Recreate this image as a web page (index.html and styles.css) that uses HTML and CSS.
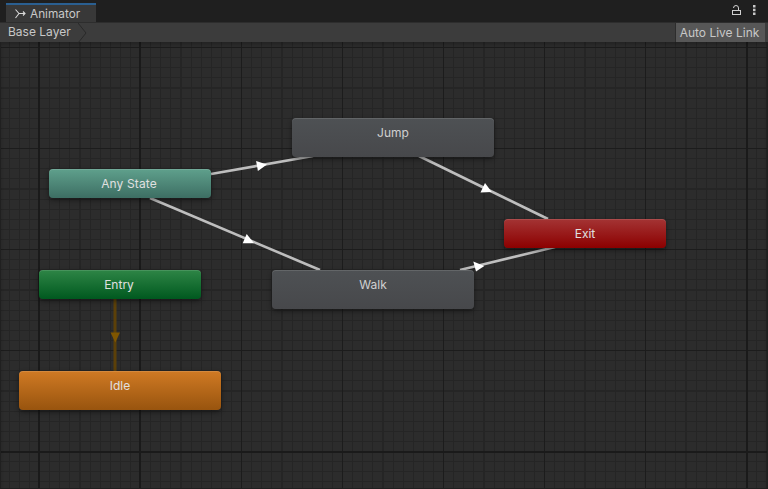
FILE: index.html
```html
<!DOCTYPE html>
<html lang="en">
<head>
<meta charset="utf-8">
<title>Animator</title>
<link rel="stylesheet" href="styles.css">
</head>
<body>
<div class="window">
  <header class="tabbar">
    <div class="tab">
      <svg class="tab-icon" width="11" height="10" viewBox="0 0 11 10"><path d="M0.5 0.5 4 4.5H10M0.5 9 4 4.5M8 2.5 10 4.5 8 6.5" fill="none" stroke="#d8d8d8" stroke-width="1.1"/></svg>
      <span>Animator</span>
    </div>
    <div class="tab-actions">
      <svg width="9" height="10" viewBox="0 0 9 10"><path d="M1.5 3a2.5 2.5 0 0 1 5 0V5" fill="none" stroke="#d0d0d0"/><rect x="0.5" y="5.5" width="8" height="4" fill="none" stroke="#d0d0d0"/></svg>
      <svg width="3" height="10" viewBox="0 0 3 10"><rect x="0" y="0" width="2.5" height="2.5" fill="#c8c8c8"/><rect x="0" y="3.7" width="2.5" height="2.5" fill="#c8c8c8"/><rect x="0" y="7.5" width="2.5" height="2.5" fill="#c8c8c8"/></svg>
    </div>
  </header>
  <div class="toolbar">
    <div class="crumb">Base Layer
      <svg class="crumb-tip" width="10" height="20" viewBox="0 0 10 20"><path d="M0 0 8 10 0 20" fill="#3c3c3c" stroke="#2a2a2a"/></svg>
    </div>
    <div class="live-link">Auto Live Link</div>
  </div>
  <main class="canvas">
    <svg class="edges" width="768" height="447" viewBox="0 42 768 447">
      <g class="edge">
        <line x1="211" y1="174" x2="313" y2="156"/>
        <polygon points="267,164.5 257.9,170.9 256.1,161.1"/>
        <line x1="419" y1="156" x2="548" y2="219"/>
        <polygon points="491.7,192 485,183 480.5,192.5"/>
        <line x1="150" y1="198" x2="320" y2="270"/>
        <polygon points="254,243.3 246.7,234 242.7,243.3"/>
        <line x1="460" y1="270" x2="555" y2="247"/>
        <polygon points="484.3,265.9 473.3,261.5 476,271.5"/>
      </g>
      <g class="edge-default">
        <line x1="115" y1="299" x2="115" y2="371"/>
        <polygon points="110.5,332.5 120,332.5 115.3,342.5"/>
      </g>
    </svg>
    <div class="node node-any">Any State</div>
    <div class="node node-state node-jump">Jump</div>
    <div class="node node-exit">Exit</div>
    <div class="node node-state node-walk">Walk</div>
    <div class="node node-entry">Entry</div>
    <div class="node node-idle">Idle</div>
  </main>
</div>
</body>
</html>
```
FILE: styles.css
```css
* { box-sizing: border-box; }
html, body { margin: 0; height: 100%; overflow: hidden; background: #202020; }
body { font-family: Inter, "Liberation Sans", sans-serif; font-size: 12px; color: #c8c8c8; }
.window { width: 768px; height: 489px; display: flex; flex-direction: column; }

.tabbar { height: 22px; flex: none; display: flex; justify-content: space-between; background: #1f1f1f; padding: 3px 12px 0 6px; }
.tab { width: 90px; height: 19px; display: flex; align-items: center; gap: 4px; padding-left: 9px; background: #383838; border-top: 2px solid #2a5f91; font-size: 11.8px; }
.tab-actions { display: flex; align-items: center; gap: 12px; padding-bottom: 5px; }

.toolbar { height: 20px; flex: none; display: flex; justify-content: space-between; background: #3c3c3c; border-top: 1px solid #2d2d2d; }
.crumb { position: relative; width: 80px; padding-left: 8px; line-height: 18px; }
.crumb-tip { position: absolute; left: 78px; top: 0; }
.live-link { width: 90px; margin-right: 3px; padding-right: 2px; line-height: 19px; text-align: center; background: #575757; border-left: 1px solid #2d2d2d; }

.canvas {
  position: relative; flex: 1; overflow: hidden; margin: 0 1px 1px 1px;
  background-color: #2c2c2c;
  background-image:
    linear-gradient(to right, transparent 37px, #1a1a1a 37px 39px, transparent 39px 138px, #1a1a1a 138px 140px, transparent 140px 745px, #1a1a1a 745px 747px, transparent 747px),
    linear-gradient(to bottom, transparent 409px, #1a1a1a 409px 411px, transparent 411px),
    repeating-linear-gradient(to right, transparent 0 38px, #1c1c1c 38px 39px, transparent 39px 101px),
    repeating-linear-gradient(to bottom, transparent 0 5px, #1c1c1c 5px 6px, transparent 6px 101px),
    repeating-linear-gradient(to right, transparent 0 7.7px, #252525 7.7px 8.8px, transparent 8.8px 10.1px),
    repeating-linear-gradient(to bottom, transparent 0 5px, #252525 5px 6.1px, transparent 6.1px 10.1px);
  box-shadow: inset 0 3px 3px rgba(0,0,0,.18);
}
.edges { position: absolute; left: -1px; top: 0; }
.edge line { stroke: #bebebe; stroke-width: 2.6; }
.edge polygon { fill: #fff; }
.edge-default line { stroke: #5c4008; stroke-width: 3; }
.edge-default polygon { fill: #7f5600; }

.node {
  position: absolute; display: flex; justify-content: center; align-items: flex-start;
  width: 162px; height: 29px; padding-top: 7px; border-radius: 4px;
  color: #e0e0e0; line-height: 15px;
  box-shadow: inset 0 1px 0 rgba(255,255,255,.12), 0 2px 5px rgba(0,0,0,.45);
}
.node-state { width: 202px; height: 39px; color: #d0d0d0; background: linear-gradient(#4e5154, #47484b); }
.node-any { left: 48px; top: 127px; padding-right: 2px; letter-spacing: .12px; background: linear-gradient(#5fa08c, #3d6e63); }
.node-jump { left: 291px; top: 76px; }
.node-exit { left: 503px; top: 177px; background: linear-gradient(#a43434, #8c0000); }
.node-walk { left: 271px; top: 228px; }
.node-entry { left: 38px; top: 228px; padding-right: 2px; background: linear-gradient(#2e8546, #00591f); }
.node-idle { left: 18px; top: 329px; width: 202px; height: 39px; background: linear-gradient(#d07a24, #98540e); }
```
